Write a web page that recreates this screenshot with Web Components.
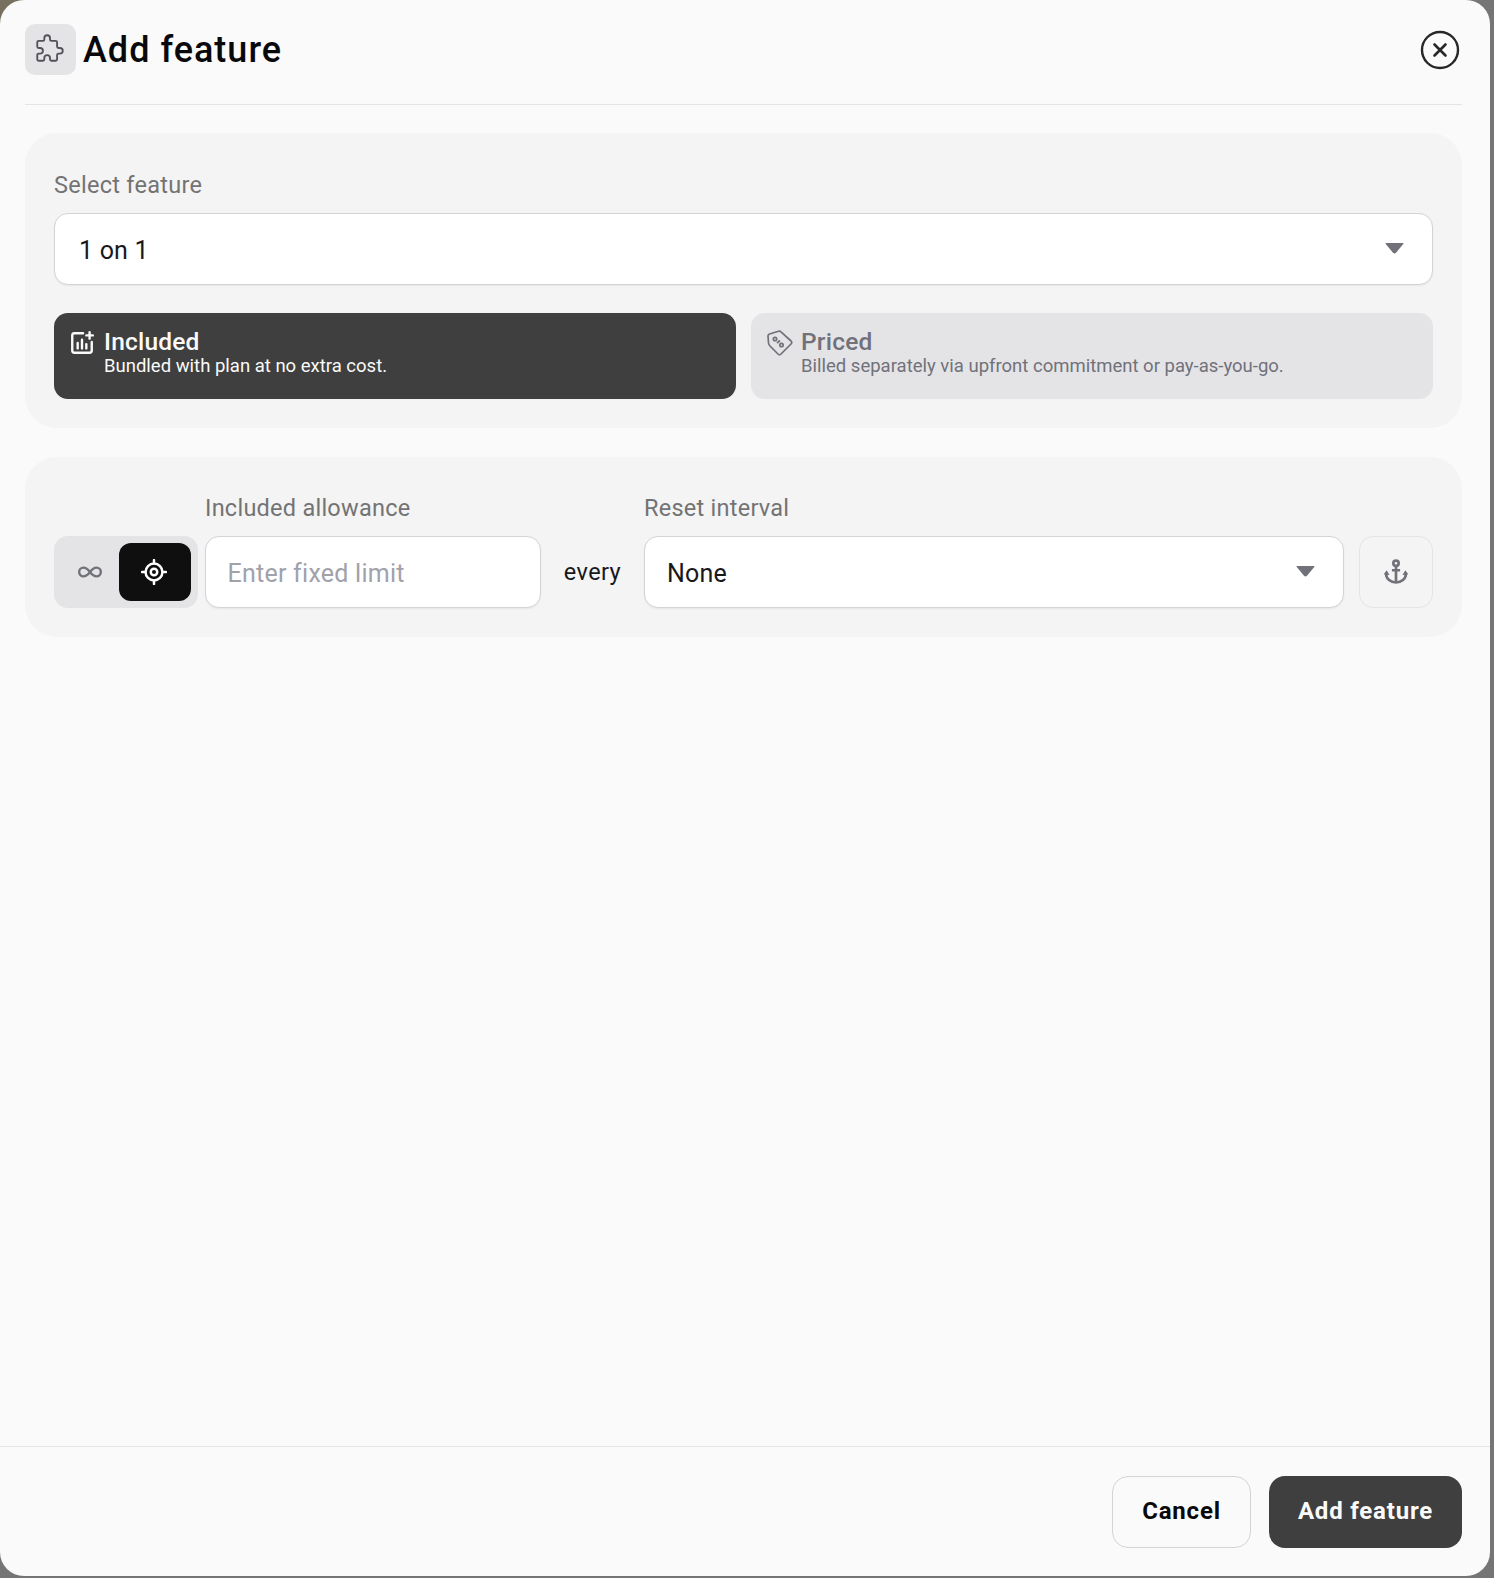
<!DOCTYPE html>
<html><head><meta charset="utf-8"><style>
html,body{margin:0;padding:0;height:1578px;overflow:hidden}
html{background:radial-gradient(circle at 0 0,#77705f 0,#77705f 22px,transparent 23px),#757575}
body{font-family:"Roboto","Liberation Sans",sans-serif}
</style></head><body>
<x-modal>
  <x-header slot="header"></x-header>
  <x-section style="height:295px">
    <x-label style="margin-top:8px">Select feature</x-label>
    <x-select style="margin-top:13px" value="1 on 1" pad="24"></x-select>
    <div style="display:flex;gap:15px;margin-top:28px">
      <x-card active title-text="Included" desc="Bundled with plan at no extra cost." icon="chart"></x-card>
      <x-card title-text="Priced" desc="Billed separately via upfront commitment or pay-as-you-go." icon="tag"></x-card>
    </div>
  </x-section>
  <x-section style="height:180px;margin-top:29px">
    <x-allowance></x-allowance>
  </x-section>
  <x-footer slot="footer"></x-footer>
</x-modal>
<script>
const F='"Roboto","Liberation Sans",sans-serif';
const def=(n,html,extra={})=>{customElements.define(n,class extends HTMLElement{
  constructor(){super();this.attachShadow({mode:'open'}).innerHTML=html}
  connectedCallback(){if(extra.render)this.shadowRoot.innerHTML=extra.render(this)}
})};
def('x-modal',`<style>
:host{display:flex;flex-direction:column;box-sizing:border-box;width:1490px;height:1576px;background:#fafafa;border-radius:24px;position:relative}
.main{flex:1;padding:0 28px 0 25px}
</style><slot name="header"></slot><div class="main"><slot></slot></div><slot name="footer"></slot>`);
def('x-header',`<style>
:host{display:block;margin:0 28px 28px 25px;height:105px;box-sizing:border-box;border-bottom:1px solid #e4e4e7;padding-top:24px}
.r{display:flex;align-items:center;height:51px}
.ic{width:51px;height:51px;background:#e4e4e7;border-radius:10px;display:flex;align-items:center;justify-content:center}
.ic svg{margin:-3px 2px 0 0}
h1{margin:2px 0 0 7px;font:500 36px/51px ${F};letter-spacing:1px;color:#09090b}
.x{margin-left:auto;margin-right:2px;width:40px;height:40px;display:block}
</style><div class="r"><div class="ic"><svg width="34" height="34" viewBox="0 0 24 24" fill="none" stroke="#52525b" stroke-width="1.300" stroke-linejoin="round" stroke-linecap="round"><path d="M4 7h3a1 1 0 0 0 1-1v-1a2 2 0 0 1 4 0v1a1 1 0 0 0 1 1h3a1 1 0 0 1 1 1v3a1 1 0 0 0 1 1h1a2 2 0 0 1 0 4h-1a1 1 0 0 0-1 1v3a1 1 0 0 1-1 1h-3a1 1 0 0 1-1-1v-1a2 2 0 0 0-4 0v1a1 1 0 0 1-1 1h-3a1 1 0 0 1-1-1v-3a1 1 0 0 1 1-1h1a2 2 0 0 0 0-4h-1a1 1 0 0 1-1-1v-3a1 1 0 0 1 1-1"/></svg></div><h1>Add feature</h1>
<svg class="x" viewBox="0 0 40 40" fill="none" stroke="#27272a"><circle cx="20" cy="20" r="18" stroke-width="2.400"/><path d="M14.500 14.500l11 11M25.500 14.500l-11 11" stroke-width="2.600" stroke-linecap="round"/></svg></div>`);
def('x-section',`<style>:host{display:block;box-sizing:border-box;background:#f4f4f5;border-radius:32px;padding:29px}</style><slot></slot>`);
def('x-label',`<style>:host{display:block;font:400 23.500px/30px ${F};letter-spacing:.28px;color:#737373}</style><slot></slot>`);
const caret=`<svg width="19" height="11" viewBox="0 0 19 11"><path d="M1.200 0h16.600q1.300 0 .5 1l-7.300 8.800q-1.500 1.600-3 0L.7 1q-.8-1 .5-1z" fill="#71717a"/></svg>`;
def('x-select','',{render:e=>{const p=e.getAttribute('pad');return `<style>:host{display:flex;align-items:center;box-sizing:border-box;height:72px;background:#fff;border:1px solid #d4d4d8;border-radius:14px;box-shadow:0 1px 2px rgba(0,0,0,.06);font:400 25px/1 ${F};letter-spacing:.2px;color:#18181b;padding:0 28px 0 ${p}px}
span{padding-top:2px}svg{margin-left:auto;margin-top:-2px}</style><span>${e.getAttribute('value')}</span>${caret}`}});
const icons={chart:`<svg width="26" height="26" viewBox="0 0 24 24" fill="none" stroke="currentColor" stroke-width="2.200" stroke-linecap="round" stroke-linejoin="round" style="margin-left:-1px"><path d="M13 3H5a2 2 0 0 0-2 2v14a2 2 0 0 0 2 2h14a2 2 0 0 0 2-2v-8"/><path d="M8 12v5M12 9v8M16 13v4M19 2v6M16 5h6"/></svg>`,
tag:`<svg width="26" height="26" viewBox="0 0 26 26" fill="none" stroke="currentColor" stroke-width="1.700" stroke-linejoin="round"><path d="M2.500 4 11.500 1.200Q13 .8 14 1.800L24 11Q25.500 12.500 24 14L14 24Q12.500 25.500 11 24L3 16Q1.700 14.700 1.500 13L1 6Q1 4.500 2.500 4z"/><circle cx="8" cy="9" r="1.700"/><circle cx="14.500" cy="15" r="1.700"/><path d="M10 13l3-2.500"/></svg>`};
def('x-card','',{render:e=>{const a=e.hasAttribute('active');return `<style>:host{flex:1 1 0;min-width:0;display:flex;height:86px;box-sizing:border-box;border-radius:14px;background:${a?'#3f3f3f':'#e4e4e7'};color:${a?'#fafafa':'#71717a'};padding:15px 16px 0 16px}
.i{flex:0 0 26px;margin-right:8px;height:30px;display:flex;align-items:center}
b{display:block;font:500 24.500px/27px ${F};letter-spacing:.2px}
span{display:block;font:400 18.500px/22px ${F};white-space:nowrap}</style>
<div class="i">${icons[e.getAttribute('icon')]}</div><div><b>${e.getAttribute('title-text')}</b><span>${e.getAttribute('desc')}</span></div>`}});
def('x-allowance',`<style>
:host{display:grid;grid-template-columns:151px 336px 103px 700px 89px;grid-template-rows:37px 72px;row-gap:13px}
.lb{font:400 23.500px/30px ${F};letter-spacing:.25px;color:#737373;padding-top:7px}
.tg{box-sizing:border-box;height:72px;width:144px;background:#e4e4e7;border-radius:14px;padding:7px;display:flex;align-items:center}
.inf{flex:0 0 58px;display:flex;justify-content:center;color:#71717a}
.on{flex:0 0 72px;height:58px;background:#0f0f0f;border-radius:12px;display:flex;align-items:center;justify-content:center}
.on svg{margin-right:2px}
.in{box-sizing:border-box;height:72px;background:#fff;border:1px solid #d4d4d8;border-radius:14px;box-shadow:0 1px 2px rgba(0,0,0,.06);display:flex;align-items:center;padding:2px 0 0 21.500px;font:400 25px/1 ${F};letter-spacing:.25px;color:#a1a1aa}
.ev{align-self:center;font:400 23.500px/1 ${F};letter-spacing:.4px;color:#18181b;text-align:center;margin-top:2px}
.an{box-sizing:border-box;height:72px;width:74px;justify-self:end;border:1px solid #e4e4e7;border-radius:14px;display:flex;align-items:center;justify-content:center}
</style>
<div></div><div class="lb">Included allowance</div><div></div><div class="lb">Reset interval</div><div></div>
<div class="tg"><div class="inf"><svg width="26" height="26" viewBox="0 0 24 24" fill="none" stroke="currentColor" stroke-width="2.200"><path d="M12 12c-2-2.700-4-4-6-4a4 4 0 0 0 0 8c2 0 4-1.300 6-4zm0 0c2 2.700 4 4 6 4a4 4 0 0 0 0-8c-2 0-4 1.300-6 4z"/></svg></div>
<div class="on"><svg width="26" height="26" viewBox="0 0 24 24" fill="none" stroke="#fff" stroke-width="2.300"><circle cx="12" cy="12" r="7.800"/><circle cx="12" cy="12" r="3"/><path d="M12 1v3M12 20v3M1 12h3M20 12h3" stroke-linecap="round"/></svg></div></div>
<div class="in">Enter fixed limit</div>
<div class="ev">every</div>
<x-select value="None" pad="22"></x-select>
<div class="an"><svg width="28" height="28" viewBox="0 0 24 24" fill="none" stroke="#71717a" stroke-width="2.300"><circle cx="12" cy="4.500" r="2.300"/><path d="M12 7V21M8.500 10.500h7"/><path d="M3.500 13.500c0 4.500 4 7.500 8.500 7.500s8.500-3 8.500-7.500"/><path d="M1.500 14l2.500-3.500 2.500 4zM22.500 14l-2.500-3.500-2.500 4z" fill="#71717a" stroke="none"/></svg></div>`);
def('x-footer',`<style>
:host{display:flex;justify-content:flex-end;gap:18px;box-sizing:border-box;height:130px;border-top:1px solid #e4e4e7;padding:29px 28px 0 0}
.b{box-sizing:border-box;height:72px;border-radius:16px;display:flex;align-items:center;justify-content:center;padding-bottom:2px;font:700 24px/1 ${F};letter-spacing:.8px}
.c{width:139px;border:1px solid #d4d4d8;color:#09090b}
.a{width:193px;background:#3f3f3f;color:#fafafa}
</style><div class="b c">Cancel</div><div class="b a">Add feature</div>`);
</script></body></html>
